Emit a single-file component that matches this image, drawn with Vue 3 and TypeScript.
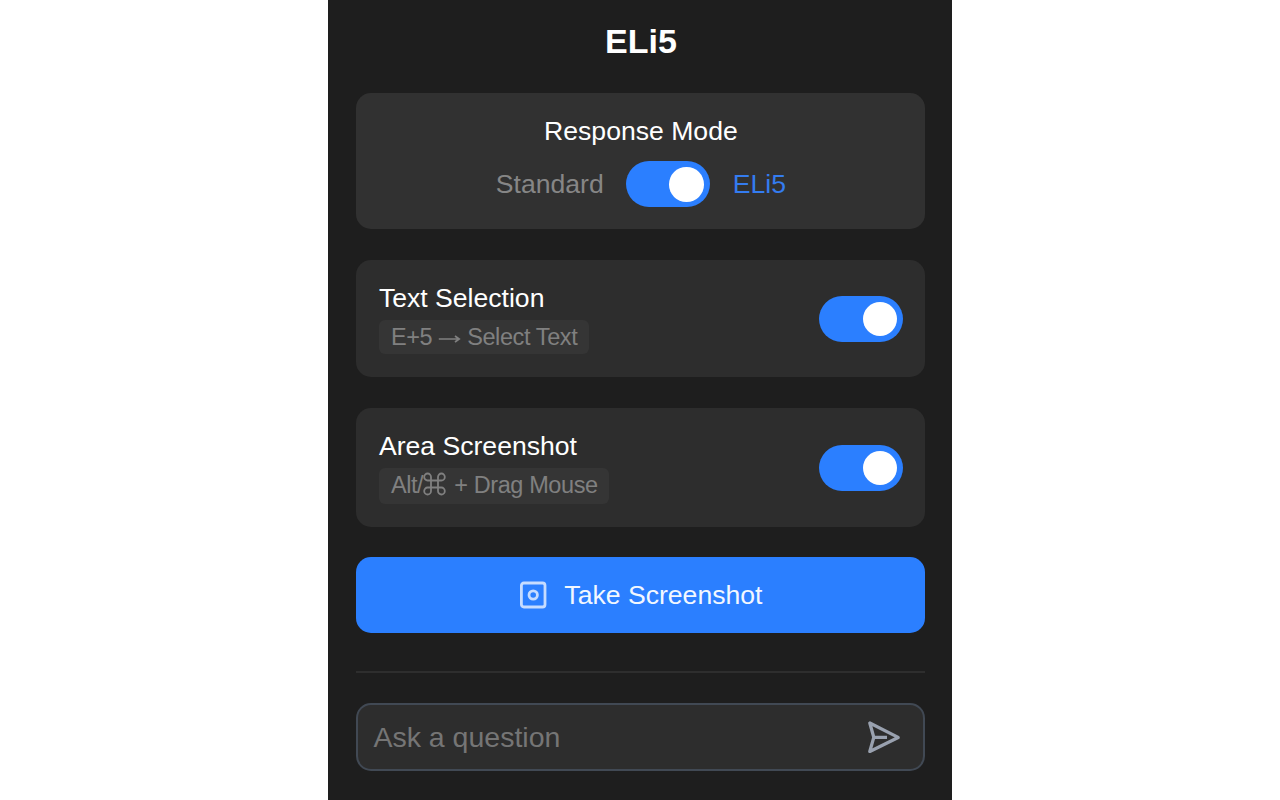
<script setup lang="ts">
import { ref } from 'vue'

interface Feature {
  id: string
  title: string
  before: string
  symbol: string
  after: string
  enabled: boolean
}

const eliMode = ref<boolean>(true)
const question = ref<string>('')
const features = ref<Feature[]>([
  { id: 'selection', title: 'Text Selection', before: 'E+5', symbol: 'arrow', after: 'Select Text', enabled: true },
  { id: 'area', title: 'Area Screenshot', before: 'Alt/', symbol: 'command', after: '+ Drag Mouse', enabled: true },
])
</script>

<template>
  <main class="popup">
    <h1 class="title"><span>ELi5</span></h1>

    <section class="card mode">
      <h2 class="mode-title">Response Mode</h2>
      <div class="mode-row">
        <span class="mode-label standard">Standard</span>
        <button class="toggle" :class="{ on: eliMode }" aria-label="Response mode" @click="eliMode = !eliMode">
          <span class="knob"></span>
        </button>
        <span class="mode-label eli">ELi5</span>
      </div>
    </section>

    <section v-for="f in features" :key="f.id" class="card feature" :class="f.id">
      <div class="info">
        <h2 class="feature-title">{{ f.title }}</h2>
        <div class="shortcut">
          <span class="before">{{ f.before }}</span>
          <svg v-if="f.symbol === 'arrow'" class="arrow" width="23" height="12" viewBox="0 0 23 12">
            <path d="M0.8 6H21M17 3L21.2 6L17 9" />
          </svg>
          <svg v-else class="command" width="23" height="24" viewBox="0 0 23 24">
            <path d="M8 8.5V5A3.4 3.5 0 1 0 4.6 8.5H18.4A3.4 3.5 0 1 0 15 5V19A3.4 3.5 0 1 0 18.4 15.5H4.6A3.4 3.5 0 1 0 8 19Z" />
          </svg>
          <span class="after">{{ f.after }}</span>
        </div>
      </div>
      <button class="toggle" :class="{ on: f.enabled }" :aria-label="f.title" @click="f.enabled = !f.enabled">
        <span class="knob"></span>
      </button>
    </section>

    <button class="capture">
      <svg width="28" height="28" viewBox="0 0 28 28">
        <rect x="2.4" y="2" width="23.6" height="24" rx="2.5" />
        <circle cx="14.2" cy="14" r="4.2" />
      </svg>
      <span>Take Screenshot</span>
    </button>

    <hr class="divider" />

    <form class="ask" @submit.prevent>
      <input v-model="question" type="text" placeholder="Ask a question" />
      <button class="send" aria-label="Send">
        <svg width="34" height="34" viewBox="0 0 34 34">
          <path d="M2.8 3L31.2 17.4L2.8 31.4L6.8 17.4ZM6.8 17.4H20" />
        </svg>
      </button>
    </form>
  </main>
</template>

<style>
html,
body {
  margin: 0;
  background: #ffffff;
}
</style>

<style scoped>
* {
  box-sizing: border-box;
}
.popup {
  width: 624px;
  height: 800px;
  margin: 0 auto;
  padding: 0 26.6px 0 28.4px;
  display: flex;
  flex-direction: column;
  overflow: hidden;
  background: #1e1e1e;
  font-family: "Liberation Sans", Arial, sans-serif;
  color: #ffffff;
}
h1,
h2 {
  margin: 0;
}
button {
  border: 0;
  padding: 0;
  font-family: inherit;
  cursor: pointer;
}
svg {
  display: block;
  flex: none;
  fill: none;
}
.title {
  height: 93px;
  padding-top: 21px;
  font-size: 34px;
  line-height: 40px;
  text-align: center;
}
.card {
  flex: none;
  border-radius: 15px;
  background: #2d2d2d;
}
.mode {
  height: 136.4px;
  padding-top: 22px;
  background: #313131;
}
.mode-title {
  font-size: 26.6px;
  line-height: 32px;
  font-weight: 400;
  text-align: center;
}
.mode-row {
  display: flex;
  align-items: center;
  justify-content: center;
  margin-top: 14px;
}
.mode-label {
  font-size: 26.6px;
  line-height: 32px;
}
.standard {
  margin-right: 22px;
  color: #868686;
}
.eli {
  margin-left: 23px;
  color: #347cf0;
}
.toggle {
  flex: none;
  width: 84px;
  height: 46px;
  padding: 6px;
  display: flex;
  border-radius: 23px;
  background: #555555;
}
.toggle.on {
  justify-content: flex-end;
  background: #2b7fff;
}
.knob {
  width: 34.5px;
  height: 34.5px;
  border-radius: 50%;
  background: #ffffff;
}
.feature {
  display: flex;
  align-items: flex-start;
  justify-content: space-between;
  margin-top: 30.6px;
  padding: 22px 22px 0 22.5px;
}
.selection {
  height: 117px;
}
.selection .toggle {
  margin-top: 13.8px;
}
.area {
  height: 119px;
}
.area .toggle {
  margin-top: 15.4px;
}
.feature-title {
  font-size: 26.6px;
  line-height: 32px;
  font-weight: 400;
}
.shortcut {
  display: flex;
  align-items: center;
  width: fit-content;
  height: 34px;
  margin-top: 6.4px;
  padding: 0 11.5px 0 12px;
  border-radius: 6px;
  background: #353535;
  color: #808080;
  font-size: 23.5px;
  line-height: 32px;
  letter-spacing: -0.4px;
  white-space: nowrap;
}
.area .shortcut {
  height: 36px;
  padding-bottom: 2px;
}
.arrow {
  margin: 4px 6px 0 6px;
  stroke: #808080;
  stroke-width: 1.7;
}
.command {
  margin-right: 8px;
  margin-bottom: 1px;
  stroke: #808080;
  stroke-width: 1.8;
}
.capture {
  flex: none;
  display: flex;
  align-items: center;
  justify-content: center;
  gap: 17px;
  height: 75.5px;
  margin-top: 30.8px;
  border-radius: 15px;
  background: #2b7fff;
  color: #f2f7ff;
  font-size: 26.6px;
  line-height: 32px;
}
.capture svg {
  stroke: #c6dcff;
  stroke-width: 2.8;
}
.divider {
  flex: none;
  width: 100%;
  height: 2px;
  margin: 38px 0 30px;
  border: 0;
  background: #2e2e2e;
}
.ask {
  flex: none;
  display: flex;
  align-items: center;
  height: 68px;
  padding: 0 22px 0 15px;
  border: 2px solid #414954;
  border-radius: 15px;
  background: #2d2d2d;
}
.ask input {
  flex: 1;
  min-width: 0;
  padding: 0;
  border: 0;
  outline: 0;
  background: transparent;
  color: #ffffff;
  font-family: inherit;
  font-size: 28.5px;
  line-height: 34px;
}
.ask input::placeholder {
  color: #757575;
}
.send {
  background: transparent;
}
.send svg {
  stroke: #99a1af;
  stroke-width: 3.3;
  stroke-linejoin: round;
  stroke-linecap: butt;
}
</style>
